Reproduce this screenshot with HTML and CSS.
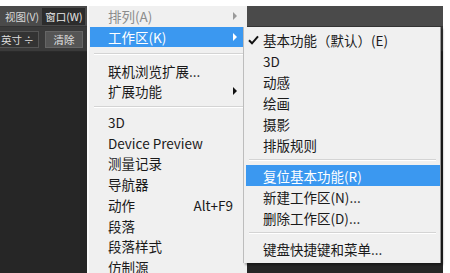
FILE: index.html
```html
<!DOCTYPE html>
<html>
<head>
<meta charset="utf-8">
<link rel="stylesheet" href="styles.css">
</head>
<body>
<div class="screen">
  <div class="app">
    <div class="bar1">
      <span class="top-item">视图(V)</span>
      <span class="top-item active">窗口(W)</span>
    </div>
    <div class="bar2">
      <span class="select">英寸<b>÷</b></span>
      <span class="button">清除</span>
    </div>
    <div class="canvas"></div>
  </div>

  <div class="menu main-menu">
    <div class="item disabled"><span class="label">排列(A)</span><span class="arrow"></span></div>
    <div class="item hl"><span class="label">工作区(K)</span><span class="arrow"></span></div>
    <div class="sep first"></div>
    <div class="item"><span class="label">联机浏览扩展...</span></div>
    <div class="item"><span class="label">扩展功能</span><span class="arrow"></span></div>
    <div class="sep"></div>
    <div class="item"><span class="label">3D</span></div>
    <div class="item"><span class="label">Device Preview</span></div>
    <div class="item"><span class="label">测量记录</span></div>
    <div class="item"><span class="label">导航器</span></div>
    <div class="item"><span class="label">动作</span><span class="shortcut">Alt+F9</span></div>
    <div class="item"><span class="label">段落</span></div>
    <div class="item"><span class="label">段落样式</span></div>
    <div class="item last"><span class="label">仿制源</span></div>
  </div>

  <div class="menu sub-menu">
    <div class="item"><span class="check"><svg width="11" height="10" viewBox="0 0 11 10"><path d="M1 5.2 L4 8.3 L10 1.3" fill="none" stroke="#111" stroke-width="2"/></svg></span><span class="label">基本功能（默认）(E)</span></div>
    <div class="item"><span class="check"></span><span class="label">3D</span></div>
    <div class="item"><span class="check"></span><span class="label">动感</span></div>
    <div class="item"><span class="check"></span><span class="label">绘画</span></div>
    <div class="item"><span class="check"></span><span class="label">摄影</span></div>
    <div class="item"><span class="check"></span><span class="label">排版规则</span></div>
    <div class="sep"></div>
    <div class="item hl"><span class="check"></span><span class="label">复位基本功能(R)</span></div>
    <div class="item"><span class="check"></span><span class="label">新建工作区(N)...</span></div>
    <div class="item"><span class="check"></span><span class="label">删除工作区(D)...</span></div>
    <div class="sep"></div>
    <div class="item"><span class="check"></span><span class="label">键盘快捷键和菜单...</span></div>
  </div>
</div>
</body>
</html>
```

FILE: styles.css
```css
html, body {
  margin: 0;
  padding: 0;
  background: #ffffff;
}

.screen {
  position: relative;
  width: 450px;
  height: 273px;
  overflow: hidden;
  padding-top: 6px;
  box-sizing: border-box;
  background: #ffffff;
  font-family: "Noto Sans CJK SC", "Noto Sans", sans-serif;
}

.app {
  width: 443px;
  height: 267px;
  background: #262626;
  display: flex;
  flex-direction: column;
}

.bar1 {
  height: 20px;
  background: #4a4a4a;
  display: flex;
  align-items: center;
  gap: 1px;
  padding-left: 3px;
  border-bottom: 1px solid #333;
}

.top-item {
  font-size: 10.5px;
  color: #d8d8d8;
  padding: 1px 2px;
  line-height: 15px;
  white-space: nowrap;
}

.top-item.active {
  background: #2c2c2c;
  color: #e8e8e8;
  padding: 1px 3px;
}

.bar2 {
  height: 24px;
  background: #3a3a3a;
  display: flex;
  align-items: center;
  gap: 6px;
  border-bottom: 1px solid #2a2a2a;
}

.select {
  font-size: 10.5px;
  color: #dddddd;
  width: 33px;
  height: 15px;
  line-height: 15px;
  background: #333;
  border: 1px solid #555;
  border-left: none;
  padding-left: 1px;
  white-space: nowrap;
  display: flex;
  justify-content: space-between;
  padding-right: 4px;
}

.select b {
  font-weight: normal;
}

.button {
  font-size: 10.5px;
  color: #e0e0e0;
  width: 36px;
  height: 15px;
  line-height: 15px;
  text-align: center;
  background: #555;
  border: 1px solid #666;
  white-space: nowrap;
}

.canvas {
  flex: 1;
  background: #262626;
}

.menu {
  position: absolute;
  background: #f0f0f0;
  color: #1a1a1a;
  font-size: 13.5px;
}

.main-menu {
  left: 87px;
  top: 6px;
  width: 157px;
  height: 267px;
  overflow: hidden;
  border-left: 2px solid #fafafa;
  padding-left: 1px;
  box-sizing: content-box;
}

.item {
  height: 20.7px;
  display: flex;
  align-items: center;
  position: relative;
  white-space: nowrap;
}

.main-menu .item {
  padding-left: 18px;
  padding-right: 10px;
}

.main-menu .item.last {
  height: 14px;
  align-items: flex-start;
  line-height: 14px;
  padding-top: 3px;
}

.main-menu .label {
  flex: 1;
}

.item.disabled {
  color: #8c8c8c;
}

.item.hl {
  background: #3b98f0;
  color: #ffffff;
}

.arrow {
  width: 0;
  height: 0;
  border-left: 4px solid #111;
  border-top: 4px solid transparent;
  border-bottom: 4px solid transparent;
}

.disabled .arrow {
  border-left-color: #9a9a9a;
}

.hl .arrow {
  border-left-color: #ffffff;
}

.shortcut {
  margin-right: 4px;
}

.sep {
  height: 10px;
  display: flex;
  align-items: center;
  margin-left: 4px;
}

.sep::before {
  content: "";
  display: block;
  width: 100%;
  height: 1px;
  background: #d4d4d4;
  border-bottom: 1px solid #ffffff;
}

.main-menu .sep.first {
  height: 13px;
}

.sub-menu {
  left: 243px;
  top: 27px;
  width: 194px;
  padding: 2px 0 4px 2px;
  border-left: 1px solid #bdbdbd;
  border-right: 1px solid #9a9a9a;
  box-shadow: 2px 2px 2px rgba(0, 0, 0, 0.35);
}

.sub-menu .item {
  height: 21px;
}

.sub-menu .sep {
  margin-left: 3px;
  margin-right: 4px;
}

.check {
  width: 14px;
  display: flex;
  justify-content: center;
  margin-right: 3px;
}
```
